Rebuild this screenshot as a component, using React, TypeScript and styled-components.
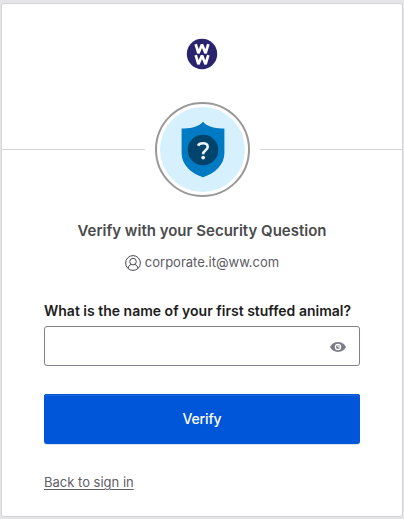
import React, { useState } from 'react';
import styled, { createGlobalStyle } from 'styled-components';

const GlobalStyle = createGlobalStyle`
  * { box-sizing: border-box; }
  body {
    margin: 0;
    background: #e5e5e7;
    font-family: Inter, "Liberation Sans", sans-serif;
  }
`;

const Page = styled.div`
  height: 519px;
  padding: 3px 1px 2px;
`;

const Card = styled.main`
  height: 514px;
  background: #fff;
  border: 1px solid #d4d4d7;
  border-radius: 3px;
  display: flex;
  flex-direction: column;
`;

const Header = styled.header`
  height: 98px;
  padding-top: 34px;
  display: flex;
  justify-content: center;
`;

const Logo = styled.svg`
  width: 32px;
  height: 32px;
`;

const FactorRow = styled.div`
  display: grid;
  grid-template-columns: 143px 115px 1fr;
  align-items: center;
  height: 95px;
`;

const Rule = styled.div`
  height: 1px;
  background: #d5d5d8;
`;

const Badge = styled.div`
  width: 95px;
  height: 95px;
  justify-self: center;
  border: 2px solid #989898;
  border-radius: 50%;
  padding: 3px;
  background: #fff;
`;

const BadgeArt = styled.svg`
  display: block;
  width: 85px;
  height: 85px;
`;

const Title = styled.h1`
  margin: 24px 0 0;
  height: 20px;
  line-height: 20px;
  text-align: center;
  font-size: 15px;
  font-weight: 600;
  color: #4b4b4d;
  white-space: nowrap;
`;

const Identity = styled.div`
  margin-top: 13px;
  height: 18px;
  display: flex;
  justify-content: center;
  align-items: center;
  gap: 4px;
  font-size: 13px;
  color: #5b5b64;
`;

const Email = styled.span`
  line-height: 18px;
  padding-bottom: 2px;
`;

const Form = styled.form`
  margin: 29px 42px 0;
  display: flex;
  flex-direction: column;
`;

const Label = styled.label`
  height: 20px;
  line-height: 20px;
  font-size: 14px;
  font-weight: 600;
  color: #1d1d21;
  white-space: nowrap;
`;

const Field = styled.div`
  margin-top: 5px;
  height: 40px;
  display: flex;
  align-items: center;
  border: 1px solid #81818d;
  border-radius: 3px;
  padding-right: 13px;
`;

const Answer = styled.input`
  flex: 1;
  min-width: 0;
  height: 100%;
  border: 0;
  outline: 0;
  padding: 0 10px;
  background: transparent;
  font: inherit;
  font-size: 14px;
`;

const Reveal = styled.button`
  border: 0;
  padding: 0;
  background: none;
  height: 16px;
  width: 16px;
  margin-top: 2px;
  cursor: pointer;
  svg { display: block; }
`;

const Submit = styled.button`
  margin-top: 28px;
  height: 50px;
  padding: 0 0 2px;
  border: 0;
  border-radius: 3px;
  background: #0056d9;
  box-shadow: inset 0 1px #0056d9, inset 0 2px #1c67dc, 0 1px #dce3ef;
  color: #fff;
  font-family: inherit;
  font-size: 14px;
  font-weight: 500;
  letter-spacing: -0.15px;
  cursor: pointer;
`;

const BackLink = styled.a`
  align-self: flex-start;
  margin-top: 29px;
  line-height: 18px;
  font-size: 13px;
  color: #606068;
  text-decoration: underline;
  text-underline-offset: 2px;
`;

const WWLogo = () => (
  <Logo viewBox="0 0 32 32" role="img" aria-label="WW">
    <circle cx="16" cy="16" r="15.2" fill="#29246d" />
    <g fill="none" stroke="#fff" strokeWidth="2.7" strokeLinejoin="bevel">
      <path d="M9.7 6.2l2.7 9L16 6.6l3.6 8.6 2.7-9" />
      <path d="M9.7 17.2l2.7 9L16 17.6l3.6 8.6 2.7-9" />
    </g>
  </Logo>
);

const ShieldQuestion = () => (
  <BadgeArt viewBox="0 0 85 85" aria-hidden="true">
    <circle cx="42.5" cy="42.5" r="42.5" fill="#d7f0fe" />
    <path
      d="M43 14.8C39 19.8 30 22 21.6 21.4V46C21.6 58 31 66 43 70.3 55 66 64.4 58 64.4 46V21.4C56 22 47 19.8 43 14.8Z"
      fill="#007ac2"
    />
    <circle cx="43" cy="43" r="15.3" fill="#00446b" />
    <path
      d="M38.1 38.7C38.8 36.9 40.6 36.3 42.9 36.3c2.9 0 4.8 1.3 4.8 3.7 0 3.4-4.6 3.2-4.6 7.2"
      fill="none"
      stroke="#eaf4fa"
      strokeWidth="2.6"
    />
    <circle cx="43.2" cy="50.6" r="1.9" fill="#eaf4fa" />
  </BadgeArt>
);

const UserIcon = () => (
  <svg width="16" height="16" viewBox="0 0 16 16" fill="none" stroke="#4b4b50" aria-hidden="true">
    <circle cx="8" cy="8" r="7.4" />
    <circle cx="8" cy="6.6" r="3.3" />
    <path d="M3.2 13.4c.1-2.2 1.3-3.4 3.2-4M12.8 13.4c-.1-2.2-1.3-3.4-3.2-4" />
  </svg>
);

const EyeIcon = () => (
  <svg width="16" height="16" viewBox="0 0 16 16" aria-hidden="true">
    <path d="M0 8C1.8 4.7 4.5 3.1 8 3.1S14.2 4.7 16 8c-1.8 3.3-4.5 4.9-8 4.9S1.8 11.3 0 8Z" fill="#7c7c88" />
    <circle cx="8" cy="8" r="3.2" fill="#fff" />
    <circle cx="8" cy="8" r="2" fill="#7c7c88" />
    <path d="M8 5.5V8h2.5" fill="none" stroke="#fff" strokeWidth="1" />
  </svg>
);

export default function App() {
  const [answer, setAnswer] = useState('');
  const [visible, setVisible] = useState(false);

  return (
    <>
      <GlobalStyle />
      <Page>
        <Card>
          <Header>
            <WWLogo />
          </Header>
          <FactorRow>
            <Rule />
            <Badge>
              <ShieldQuestion />
            </Badge>
            <Rule />
          </FactorRow>
          <Title>Verify with your Security Question</Title>
          <Identity>
            <UserIcon />
            <Email>corporate.it@ww.com</Email>
          </Identity>
          <Form onSubmit={(e) => e.preventDefault()}>
            <Label htmlFor="answer">What is the name of your first stuffed animal?</Label>
            <Field>
              <Answer
                id="answer"
                type={visible ? 'text' : 'password'}
                value={answer}
                onChange={(e) => setAnswer(e.target.value)}
              />
              <Reveal type="button" aria-label="Show answer" onClick={() => setVisible(!visible)}>
                <EyeIcon />
              </Reveal>
            </Field>
            <Submit type="submit">Verify</Submit>
            <BackLink href="#">Back to sign in</BackLink>
          </Form>
        </Card>
      </Page>
    </>
  );
}
